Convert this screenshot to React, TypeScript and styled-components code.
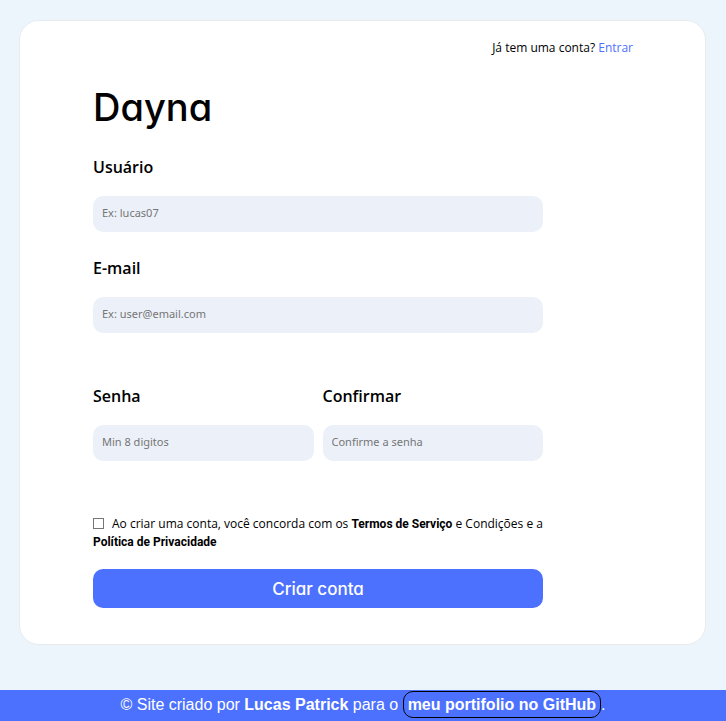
import React from "react";
import styled, { createGlobalStyle } from "styled-components";

const GlobalStyle = createGlobalStyle`
  *, *::before, *::after { box-sizing: border-box; }
  body {
    margin: 0;
    background: #ecf5fc;
    color: #000;
    font-family: "Open Sans", "Noto Sans", sans-serif;
  }
`;

const Page = styled.div`
  display: flex;
  flex-direction: column;
  min-height: 100vh;
`;

const Card = styled.main`
  margin: 20px 20px 45px 19px;
  padding: 18px 72px 36px 73px;
  background: #fff;
  border: 1px solid #e8ebee;
  border-radius: 20px;
`;

const TopNote = styled.p`
  margin: 0;
  text-align: right;
  font-size: 12px;
  line-height: 18px;
`;

const EntryLink = styled.a`
  color: #4c71ff;
  text-decoration: none;
`;

const Form = styled.form`
  max-width: 450px;
`;

const Title = styled.h1`
  margin: 24px 0;
  font-family: Inter, sans-serif;
  font-feature-settings: "cv11";
  font-size: 38px;
  font-weight: 500;
  line-height: 52px;
`;

const Field = styled.div`
  display: flex;
  flex-direction: column;
  gap: 19px;
  min-width: 0;
`;

const Label = styled.label`
  font-size: 16px;
  font-weight: 600;
  line-height: 20px;
`;

const Input = styled.input`
  width: 100%;
  height: 36px;
  padding: 0 9px 4px;
  border: 0;
  border-radius: 10px;
  background: #ecf1f9;
  font-family: "Noto Sans", sans-serif;
  font-size: 11px;
  &::placeholder { color: #757575; }
`;

const Stack = styled.div`
  display: grid;
  gap: 26px;
`;

const Pair = styled.div`
  display: grid;
  grid-template-columns: 1fr 1fr;
  gap: 9px;
  margin: 53px 0 54px;
`;

const Terms = styled.label`
  display: block;
  font-size: 12px;
  line-height: 18px;
`;

const Strong = styled.strong`
  font-family: Roboto, sans-serif;
  font-weight: 700;
`;

const Checkbox = styled.input`
  appearance: none;
  width: 11px;
  height: 11px;
  margin: 0 8px 0 0;
  border: 1px solid #767676;
  background: #fff;
  vertical-align: -1px;
  &:checked { background: #4c71ff; }
`;

const Submit = styled.button`
  display: block;
  width: 100%;
  height: 39px;
  margin-top: 18px;
  padding: 0;
  border: 0;
  border-radius: 10px;
  background: #4c71ff;
  color: #fff;
  font-family: Inter, sans-serif;
  font-feature-settings: "cv11";
  font-size: 17px;
  font-weight: 500;
  cursor: pointer;
`;

const Footer = styled.footer`
  margin-top: auto;
  padding: 1px 0 3px;
  background: #4c71ff;
  color: #fff;
  text-align: center;
  font-family: "Liberation Sans", Arial, sans-serif;
  font-size: 16px;
  line-height: 27px;
`;

const FooterLink = styled.a`
  display: inline-block;
  padding: 0 4px;
  border: 1px solid #000;
  border-radius: 10px;
  color: #fff;
  font-weight: 700;
  line-height: 25px;
  text-decoration: none;
`;

type TextFieldProps = { id: string; label: string; hint: string; type?: string };

function TextField({ id, label, hint, type = "text" }: TextFieldProps) {
  return (
    <Field>
      <Label htmlFor={id}>{label}</Label>
      <Input id={id} name={id} type={type} placeholder={hint} />
    </Field>
  );
}

export default function App() {
  return (
    <Page>
      <GlobalStyle />
      <Card>
        <TopNote>
          Já tem uma conta? <EntryLink href="#entrar">Entrar</EntryLink>
        </TopNote>
        <Form onSubmit={(event) => event.preventDefault()}>
          <Title>Dayna</Title>
          <Stack>
            <TextField id="usuario" label="Usuário" hint="Ex: lucas07" />
            <TextField id="email" label="E-mail" hint="Ex: user@email.com" type="email" />
          </Stack>
          <Pair>
            <TextField id="senha" label="Senha" hint="Min 8 digitos" type="password" />
            <TextField id="confirmar" label="Confirmar" hint="Confirme a senha" type="password" />
          </Pair>
          <Terms htmlFor="termos">
            <Checkbox id="termos" type="checkbox" />
            Ao criar uma conta, você concorda com os <Strong>Termos de Serviço</Strong> e
            Condições e a <Strong>Política de Privacidade</Strong>
          </Terms>
          <Submit type="submit">Criar conta</Submit>
        </Form>
      </Card>
      <Footer>
        © Site criado por <strong>Lucas Patrick</strong> para o{" "}
        <FooterLink href="#github">meu portifolio no GitHub</FooterLink>.
      </Footer>
    </Page>
  );
}
